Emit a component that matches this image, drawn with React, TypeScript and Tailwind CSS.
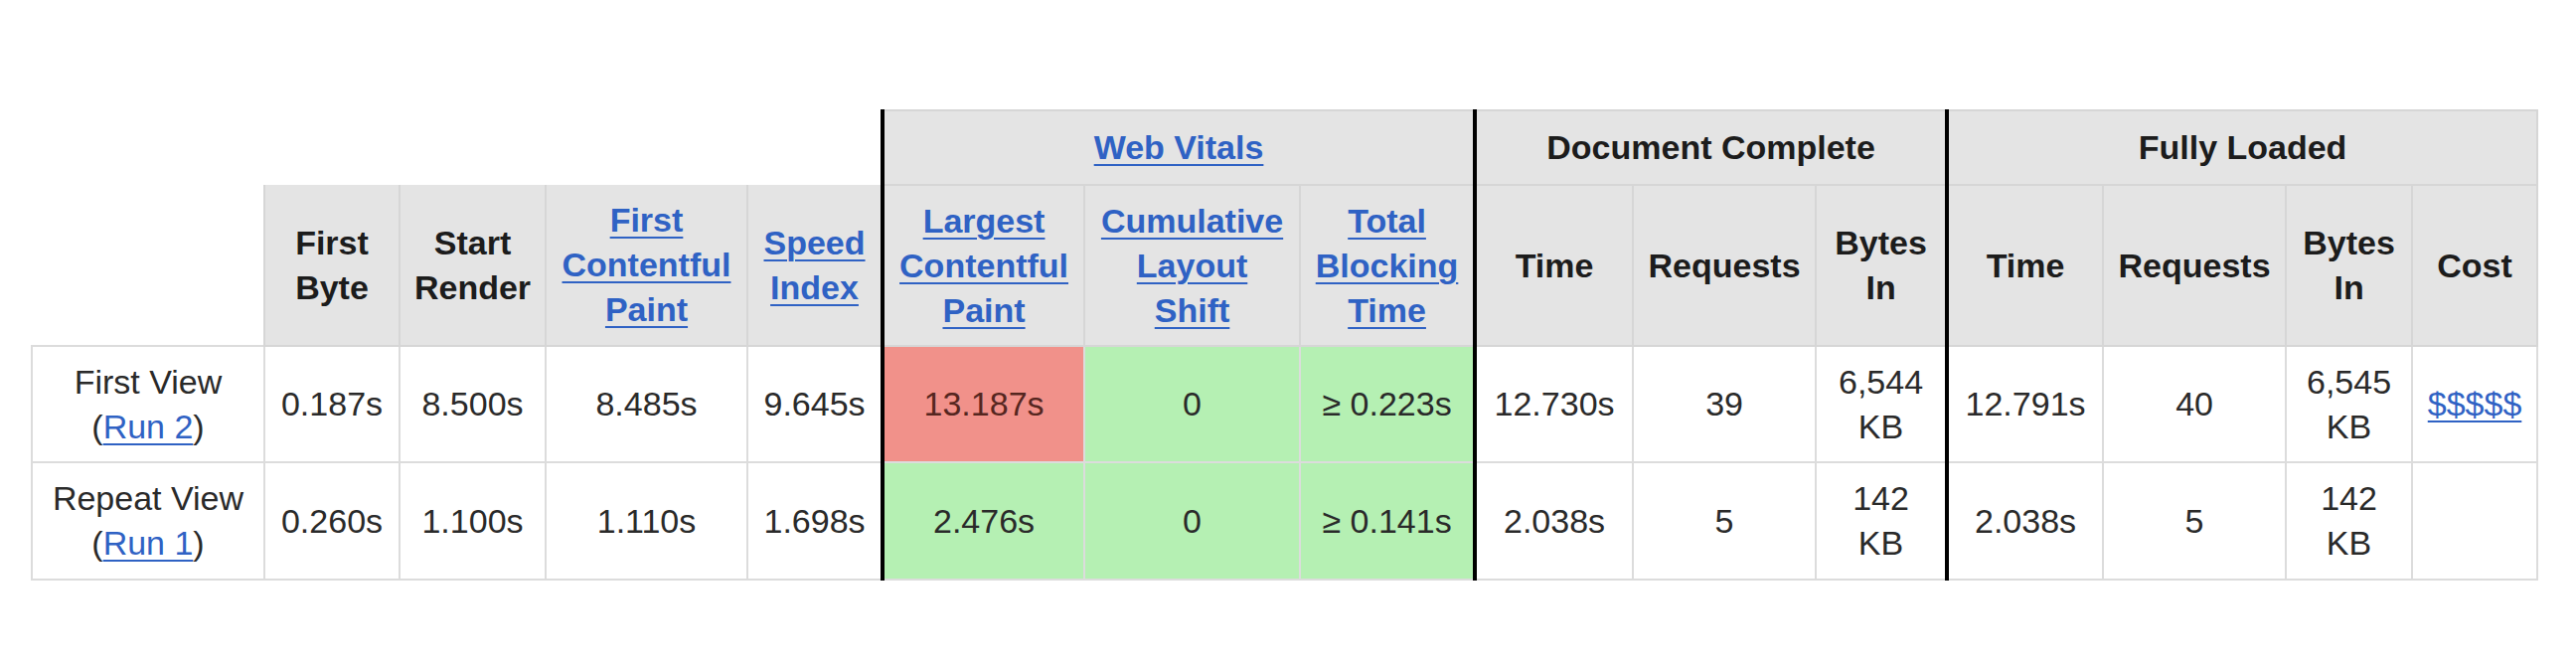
const cols = [
  "w-[234px]",
  "w-[136px]",
  "w-[147px]",
  "w-[203px]",
  "w-[136px]",
  "w-[203px]",
  "w-[217px]",
  "w-[176px]",
  "w-[159px]",
  "w-[184px]",
  "w-[132px]",
  "w-[157px]",
  "w-[184px]",
  "w-[127px]",
  "w-[126px]",
];

const link = "text-[#2f62c4] underline underline-offset-[5px] decoration-2";
const th = "border-2 border-[#d6d6d6] bg-[#e4e4e4] px-3 font-bold text-[#1c1c1c] text-center align-middle";
const td = "border-2 border-[#dcdcdc] px-3 text-center align-middle text-[#2a2a2a]";
const red = "bg-[#f1918a] text-[#55261f]";
const green = "bg-[#b5f0b3] text-[#1d4a1d]";

function Two({ a, b }: { a: string; b: string }) {
  return (
    <>
      {a}
      <br />
      {b}
    </>
  );
}

export default function App() {
  const rows = [
    {
      label: "First View",
      run: "Run 2",
      vals: ["0.187s", "8.500s", "8.485s", "9.645s"],
      lcp: "13.187s",
      lcpBad: true,
      cls: "0",
      tbt: "≥ 0.223s",
      doc: ["12.730s", "39", "6,544"],
      full: ["12.791s", "40", "6,545"],
      cost: true,
      h: "h-[117px]",
    },
    {
      label: "Repeat View",
      run: "Run 1",
      vals: ["0.260s", "1.100s", "1.110s", "1.698s"],
      lcp: "2.476s",
      lcpBad: false,
      cls: "0",
      tbt: "≥ 0.141s",
      doc: ["2.038s", "5", "142"],
      full: ["2.038s", "5", "142"],
      cost: false,
      h: "h-[118px]",
    },
  ];

  return (
    <div className="min-h-[676px] bg-white pl-[31px] pt-[110px] font-['Liberation_Sans',Arial,sans-serif] text-[34px] leading-[45px]">
      <table className="table-fixed border-collapse w-[2522px]">
        <colgroup>
          {cols.map((c, i) => (
            <col key={i} className={c} />
          ))}
        </colgroup>
        <thead>
          <tr className="h-[75px]">
            <th colSpan={5} className="border-0 bg-white"></th>
            <th colSpan={3} className={`${th} border-l-4 border-l-black border-r-4 border-r-black`}>
              <a href="#" className={link}>Web Vitals</a>
            </th>
            <th colSpan={3} className={`${th} border-r-4 border-r-black`}>Document Complete</th>
            <th colSpan={4} className={th}>Fully Loaded</th>
          </tr>
          <tr className="h-[162px]">
            <th className="border-0 bg-white"></th>
            <th className={`${th} border-t-0`}><Two a="First" b="Byte" /></th>
            <th className={`${th} border-t-0`}><Two a="Start" b="Render" /></th>
            <th className={`${th} border-t-0`}>
              <a href="#" className={link}>First Contentful Paint</a>
            </th>
            <th className={`${th} border-t-0`}>
              <a href="#" className={link}>Speed Index</a>
            </th>
            <th className={`${th} border-l-4 border-l-black`}>
              <a href="#" className={link}>Largest Contentful Paint</a>
            </th>
            <th className={th}>
              <a href="#" className={link}>Cumulative Layout Shift</a>
            </th>
            <th className={`${th} border-r-4 border-r-black`}>
              <a href="#" className={link}>Total Blocking Time</a>
            </th>
            <th className={th}>Time</th>
            <th className={th}>Requests</th>
            <th className={`${th} border-r-4 border-r-black`}><Two a="Bytes" b="In" /></th>
            <th className={th}>Time</th>
            <th className={th}>Requests</th>
            <th className={th}><Two a="Bytes" b="In" /></th>
            <th className={th}>Cost</th>
          </tr>
        </thead>
        <tbody>
          {rows.map((r) => (
            <tr key={r.label} className={r.h}>
              <td className={td}>
                {r.label}
                <br />(<a href="#" className={link}>{r.run}</a>)
              </td>
              {r.vals.map((v, i) => (
                <td key={i} className={td}>{v}</td>
              ))}
              <td className={`${td} border-l-4 border-l-black ${r.lcpBad ? red : green}`}>{r.lcp}</td>
              <td className={`${td} ${green}`}>{r.cls}</td>
              <td className={`${td} ${green} border-r-4 border-r-black`}>{r.tbt}</td>
              <td className={td}>{r.doc[0]}</td>
              <td className={td}>{r.doc[1]}</td>
              <td className={`${td} border-r-4 border-r-black`}><Two a={r.doc[2]} b="KB" /></td>
              <td className={td}>{r.full[0]}</td>
              <td className={td}>{r.full[1]}</td>
              <td className={td}><Two a={r.full[2]} b="KB" /></td>
              <td className={td}>
                {r.cost ? <a href="#" className={link}>$$$$$</a> : null}
              </td>
            </tr>
          ))}
        </tbody>
      </table>
    </div>
  );
}
